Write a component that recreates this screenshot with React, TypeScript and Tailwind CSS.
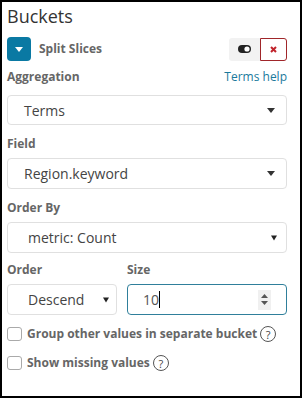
import React from 'react';

function Caret({ className }: { className?: string }) {
  return (
    <svg width="8" height="5" viewBox="0 0 8 5" className={className}>
      <path d="M0 0h8L4 5z" fill="currentColor" />
    </svg>
  );
}

function HelpIcon() {
  return (
    <span className="ml-[3px] inline-flex h-[16px] w-[16px] shrink-0 items-center justify-center rounded-full border border-[#555] text-[11px] font-normal leading-none text-[#444]">
      ?
    </span>
  );
}

function Label({ children }: { children: React.ReactNode }) {
  return <div className="h-[18px] text-[12px] font-bold leading-[18px] text-[#666]">{children}</div>;
}

export default function App() {
  return (
    <div
      className="h-[398px] w-[302px] border-2 border-black bg-white pl-[5px] pr-[13px]"
      style={{ fontFamily: '"Open Sans", "Noto Sans", sans-serif' }}
    >
      <h1 className="h-[26px] text-[18px] leading-[28px] text-[#333]">Buckets</h1>

      <div className="mt-[9px] flex h-[24px] items-center">
        <button className="flex h-[24px] w-[24px] items-center justify-center rounded-[4px] bg-[#0a79a3]">
          <Caret className="text-white" />
        </button>
        <span className="ml-2 text-[12px] font-bold text-[#666]">Split Slices</span>
        <div className="ml-auto flex h-[23px]">
          <div className="flex w-[31px] items-center justify-center rounded-l-[3px] bg-[#f2f2f2]">
            <svg width="13" height="8" viewBox="0 0 13 8">
              <rect x="0" y="0" width="13" height="8" rx="4" fill="#222" />
              <circle cx="9" cy="4" r="2.6" fill="#fff" />
            </svg>
          </div>
          <div className="flex w-[27px] items-center justify-center rounded-r-[3px] border border-[#a0262a] bg-white">
            <svg width="7" height="7" viewBox="0 0 7 7">
              <path d="M1 1l5 5M6 1L1 6" stroke="#c0232b" strokeWidth="2" />
            </svg>
          </div>
        </div>
      </div>

      <div className="mt-[7px] flex items-center justify-between">
        <Label>Aggregation</Label>
        <a className="text-[12px] leading-[18px] text-[#1a7a9c]">Terms help</a>
      </div>
      <div className="mt-[9px] flex h-[30px] items-center rounded-[4px] border border-[#e0e0e0] pl-4 pr-[11px] text-[14px] text-[#444]">
        <span>Terms</span>
        <Caret className="ml-auto text-[#333]" />
      </div>

      <div className="mt-[10px]">
        <Label>Field</Label>
      </div>
      <div className="mt-[5px] flex h-[31px] items-center rounded-[4px] border border-[#e0e0e0] pl-4 pr-[11px] text-[14px] text-[#444]">
        <span>Region.keyword</span>
        <Caret className="ml-auto text-[#333]" />
      </div>

      <div className="mt-[10px]">
        <Label>Order By</Label>
      </div>
      <div className="mt-[5px] flex h-[31px] items-center rounded-[4px] border border-[#e0e0e0] pl-5 pr-[9px] text-[14px] text-[#444]">
        <span>metric: Count</span>
        <svg width="6" height="6" viewBox="0 0 6 6" className="ml-auto">
          <path d="M0 0.5h6L3 5.5z" fill="#222" />
        </svg>
      </div>

      <div className="mt-[8px] flex gap-[10px]">
        <div className="w-[110px]">
          <Label>Order</Label>
          <div className="mt-[5px] flex h-[31px] items-center rounded-[4px] border border-[#e0e0e0] pl-5 pr-[7px] text-[14px] text-[#444]">
            <span>Descend</span>
            <svg width="6" height="6" viewBox="0 0 6 6" className="ml-auto">
              <path d="M0 0.5h6L3 5.5z" fill="#222" />
            </svg>
          </div>
        </div>
        <div className="flex-1">
          <Label>Size</Label>
          <div className="mt-[5px] flex h-[31px] items-center rounded-[4px] border border-[#2f7f9b] pl-[15px] pr-[15px] text-[14px] text-[#555]">
            <span>10</span>
            <span className="h-[17px] w-px bg-black" />
            <div className="ml-auto flex h-[20px] w-[13px] flex-col items-center justify-center gap-[3px] bg-[#f0f0f0]">
              <svg width="7" height="4" viewBox="0 0 7 4">
                <path d="M0 4h7L3.5 0z" fill="#555" />
              </svg>
              <svg width="7" height="4" viewBox="0 0 7 4">
                <path d="M0 0h7L3.5 4z" fill="#555" />
              </svg>
            </div>
          </div>
        </div>
      </div>

      <div className="mt-[11px] flex h-[16px] items-center">
        <span className="h-[14px] w-[15px] shrink-0 rounded-[3px] border border-[#aaa] bg-white" />
        <span className="ml-[5px] whitespace-nowrap text-[12px] font-bold text-[#666]">Group other values in separate bucket</span>
        <HelpIcon />
      </div>
      <div className="mt-[13px] flex h-[16px] items-center">
        <span className="h-[14px] w-[15px] shrink-0 rounded-[3px] border border-[#aaa] bg-white" />
        <span className="ml-[5px] whitespace-nowrap text-[12px] font-bold text-[#666]">Show missing values</span>
        <HelpIcon />
      </div>
    </div>
  );
}
